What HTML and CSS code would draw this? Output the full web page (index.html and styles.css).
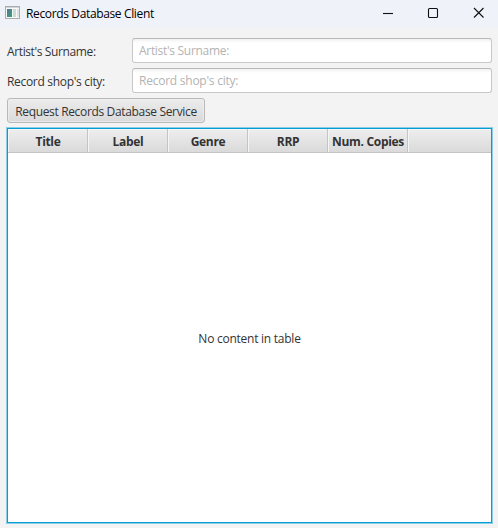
FILE: index.html
```html
<!DOCTYPE html>
<html lang="en">
<head>
<meta charset="utf-8">
<title>Records Database Client</title>
<link rel="stylesheet" href="styles.css">
</head>
<body>
<header class="titlebar">
  <svg class="app-icon" width="16" height="14" viewBox="0 0 16 14">
    <defs><linearGradient id="g" x2="1" y2="1"><stop stop-color="#5378a5"/><stop offset="1" stop-color="#3da06b"/></linearGradient></defs>
    <rect x=".5" y=".5" width="14" height="12" fill="#f7f8f8" stroke="#a9adb0"/>
    <path d="M1 1.5h13" stroke="#d0d4d6"/>
    <rect x="2" y="3" width="5" height="8" fill="url(#g)"/>
    <rect x="8" y="3" width="3" height="8" fill="#c8ddd7"/>
    <rect x="12" y="3" width="2" height="8" fill="#e0e2e2"/>
  </svg>
  <h1 class="title">Records Database Client</h1>
  <div class="controls">
    <svg width="12" height="12" viewBox="0 0 12 12"><path d="M1 6.5h10"/></svg>
    <svg width="12" height="12" viewBox="0 0 12 12"><rect x="1.5" y="1.5" width="9" height="9" rx="1"/></svg>
    <svg width="12" height="12" viewBox="0 0 12 12"><path d="M2 1l9.5 9.5M11.5 1L2 10.5"/></svg>
  </div>
</header>
<main class="content">
  <form class="form">
    <label class="t-artist" for="artist">Artist's Surname:</label>
    <input class="field t-artist-field" id="artist" placeholder="Artist's Surname:">
    <label class="t-city" for="city">Record shop's city:</label>
    <input class="field t-city-field" id="city" placeholder="Record shop's city:">
  </form>
  <button class="request" type="button">Request Records Database Service</button>
  <section class="table">
    <div class="head">
      <div class="col">Title</div>
      <div class="col">Label</div>
      <div class="col">Genre</div>
      <div class="col">RRP</div>
      <div class="col">Num. Copies</div>
      <div class="col"></div>
    </div>
    <div class="empty">No content in table</div>
  </section>
</main>
</body>
</html>
```
FILE: styles.css
```css
* { box-sizing: border-box; }
body {
  margin: 0;
  width: 498px;
  height: 528px;
  display: flex;
  flex-direction: column;
  overflow: hidden;
  background: #f3f3f3;
  color: #333;
  font: 12px/16px "Open Sans", "Noto Sans", sans-serif;
}
.titlebar {
  height: 28px;
  flex: none;
  display: flex;
  align-items: center;
  padding: 0 14px 3px 5px;
  background: #f0f2f9;
  color: #000;
}
.app-icon { margin-right: 5px; }
.title { margin: 0; padding-top: 2px; font-size: 12px; font-weight: 400; letter-spacing: -0.36px; white-space: nowrap; }
.controls { margin-left: auto; display: flex; gap: 33px; }
.controls svg { fill: none; stroke: #111; stroke-width: 1.1; }
.content { flex: 1; display: flex; flex-direction: column; padding: 10px 6px 5px 7px; }
.form {
  display: grid;
  grid-template-columns: 125px 360px;
  grid-auto-rows: 25px;
  row-gap: 5px;
  align-items: center;
}
.form label { padding-top: 2px; }
.t-artist { letter-spacing: -0.38px; }
.t-artist-field { letter-spacing: -0.3px; }
.t-city { letter-spacing: -0.31px; }
.t-city-field { letter-spacing: -0.24px; }
.field {
  width: 360px;
  height: 25px;
  padding: 0 6px;
  border: 1px solid #c8c8c8;
  border-top-color: #b8b8b8;
  border-radius: 3px;
  background: linear-gradient(#f2f2f2, #fff 4px);
  font-family: inherit;
  font-size: 12px;
  outline: 0;
}
.field::placeholder { color: #b3b3b3; opacity: 1; }
.request {
  width: 198px;
  height: 25px;
  margin: 5px 0;
  padding: 2px 0 0;
  border: 1px solid #b9b9b9;
  border-radius: 3px;
  background: linear-gradient(#ececec, #dadada);
  box-shadow: inset 0 0 0 1px #f0f0f0aa;
  color: #333;
  font: inherit;
  letter-spacing: -0.34px;
  white-space: nowrap;
}
.table {
  flex: 1;
  display: flex;
  flex-direction: column;
  border: 1px solid #039ed3;
  box-shadow: 0 0 0 1px #8acfe6;
  background: #fff;
}
.head {
  height: 24px;
  flex: none;
  display: grid;
  grid-template-columns: repeat(5, 80px) 1fr;
  border-bottom: 1px solid #c4c4c4;
  background: linear-gradient(#eee, #dadada);
  font-weight: 700;
}
.col {
  display: flex;
  align-items: center;
  justify-content: center;
  padding: 3px 0 0 1px;
  border-right: 1px solid #c4c4c4;
  box-shadow: inset 1px 1px #f5f5f5;
  letter-spacing: -0.32px;
  white-space: nowrap;
}
.col:last-child { border-right: 0; }
.empty { flex: 1; display: flex; align-items: center; justify-content: center; padding-top: 2px; letter-spacing: -0.25px; }
```
